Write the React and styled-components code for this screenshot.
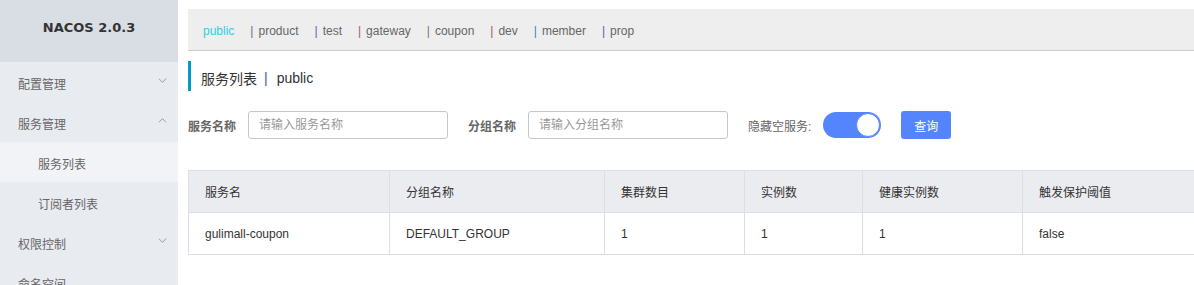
import React, { useState } from 'react';
import styled, { createGlobalStyle } from 'styled-components';

const GlobalStyle = createGlobalStyle`
  html, body {
    margin: 0;
    padding: 0;
    background: #fff;
    font-family: "Liberation Sans", "Noto Sans CJK SC", sans-serif;
    font-size: 12px;
    color: #333;
    overflow: hidden;
  }
  * { box-sizing: border-box; }
`;

const Layout = styled.div`
  display: flex;
  width: 1194px;
  height: 285px;
  overflow: hidden;
`;

const Sidebar = styled.aside`
  width: 178px;
  flex-shrink: 0;
  background: #e8ebf0;
  display: flex;
  flex-direction: column;
  overflow: hidden;
`;

const Brand = styled.div`
  height: 62px;
  flex-shrink: 0;
  background: #d9dde4;
  display: flex;
  align-items: center;
  justify-content: center;
  padding-bottom: 8px;
  font-family: "DejaVu Sans", "Noto Sans", sans-serif;
  font-weight: bold;
  font-size: 13px;
  color: #333;
`;

const MenuItem = styled.div`
  height: 40px;
  flex-shrink: 0;
  display: flex;
  align-items: center;
  justify-content: space-between;
  padding: 2px 11px 0 ${(p) => (p.$sub ? '38px' : '18px')};
  color: #666;
  font-size: 12px;
  background: ${(p) => (p.$active ? '#f1f3f6' : 'transparent')};
`;

const Chevron = styled.svg`
  width: 9px;
  height: 9px;
  margin-top: -6px;
`;

const Main = styled.main`
  flex: 1;
  min-width: 0;
  padding: 9px 0 0 10px;
  display: flex;
  flex-direction: column;
`;

const NamespaceBar = styled.div`
  height: 42px;
  flex-shrink: 0;
  background: #eee;
  border-bottom: 1px solid #ccc;
  display: flex;
  align-items: center;
  padding: 3px 15px 0;
  font-size: 12px;
`;

const NsItem = styled.span`
  color: ${(p) => (p.$active ? '#33cde5' : '#666')};
  margin-right: 16px;
`;

const NsSplit = styled.span`
  color: ${(p) => p.$color};
  margin-right: 5px;
`;

const PageTitle = styled.div`
  margin-top: 10px;
  height: 30px;
  flex-shrink: 0;
  border-left: 3px solid #09c;
  display: flex;
  align-items: center;
  padding: 3px 0 0 10px;
  font-size: 14px;
  color: #333;
`;

const TitleSplit = styled.span`
  color: #3d5a80;
  margin: 0 9px 0 7px;
`;

const SearchRow = styled.div`
  margin-top: 20px;
  height: 28px;
  flex-shrink: 0;
  display: flex;
  align-items: center;
`;

const Label = styled.label`
  font-size: 12px;
  color: #666;
  font-weight: ${(p) => (p.$bold ? 'bold' : 'normal')};
  margin-right: 12px;
  white-space: nowrap;
`;

const Input = styled.input`
  width: 200px;
  height: 28px;
  border: 1px solid #c4c6cf;
  border-radius: 3px;
  padding: 0 10px;
  font-size: 12px;
  font-family: inherit;
  margin-right: 20px;
  outline: none;
  &::placeholder { color: #999; }
`;

const Switch = styled.button`
  width: 58px;
  height: 26px;
  border-radius: 13px;
  border: none;
  padding: 0;
  background: #5584ff;
  position: relative;
  margin-right: 20px;
  cursor: pointer;
`;

const Knob = styled.span`
  position: absolute;
  top: 1px;
  right: 1px;
  width: 24px;
  height: 24px;
  border-radius: 50%;
  background: #fff;
  border: 1px solid #5584ff;
`;

const Button = styled.button`
  width: 50px;
  height: 28px;
  border: none;
  border-radius: 3px;
  background: #5584ff;
  color: #fff;
  font-size: 12px;
  font-family: inherit;
  cursor: pointer;
`;

const Table = styled.table`
  margin-top: 31px;
  width: 1040px;
  border-collapse: collapse;
  table-layout: fixed;
  font-size: 12px;
`;

const Th = styled.th`
  height: 42px;
  background: #ebecf0;
  border: 1px solid #dcdee3;
  text-align: left;
  font-weight: normal;
  color: #333;
  padding: 0 16px;
`;

const Td = styled.td`
  height: 42px;
  border: 1px solid #dcdee3;
  color: #333;
  padding: 0 16px;
`;

const ChevronIcon = ({ up }) => (
  <Chevron viewBox="0 0 10 10">
    <polyline
      points={up ? '1,7 5,3 9,7' : '1,3 5,7 9,3'}
      fill="none"
      stroke="#8a93a3"
      strokeWidth="1"
    />
  </Chevron>
);

const namespaces = [
  { name: 'public', active: true },
  { name: 'product', split: '#6b6b8a' },
  { name: 'test', split: '#5e62a8' },
  { name: 'gateway', split: '#a2625a' },
  { name: 'coupon', split: '#77777f' },
  { name: 'dev', split: '#9a5a4e' },
  { name: 'member', split: '#2f86d0' },
  { name: 'prop', split: '#5e62a8' },
];

const columns = [
  { title: '服务名', width: 201 },
  { title: '分组名称', width: 215 },
  { title: '集群数目', width: 140 },
  { title: '实例数', width: 118 },
  { title: '健康实例数', width: 160 },
  { title: '触发保护阈值', width: 206 },
];

const rows = [['gulimall-coupon', 'DEFAULT_GROUP', '1', '1', '1', 'false']];

export default function App() {
  const [hideEmpty, setHideEmpty] = useState(true);

  return (
    <>
      <GlobalStyle />
      <Layout>
        <Sidebar>
          <Brand>NACOS 2.0.3</Brand>
          <MenuItem>配置管理<ChevronIcon /></MenuItem>
          <MenuItem>服务管理<ChevronIcon up /></MenuItem>
          <MenuItem $sub $active>服务列表</MenuItem>
          <MenuItem $sub>订阅者列表</MenuItem>
          <MenuItem>权限控制<ChevronIcon /></MenuItem>
          <MenuItem>命名空间</MenuItem>
        </Sidebar>
        <Main>
          <NamespaceBar>
            {namespaces.map((ns) => (
              <React.Fragment key={ns.name}>
                {ns.split && <NsSplit $color={ns.split}>|</NsSplit>}
                <NsItem $active={ns.active}>{ns.name}</NsItem>
              </React.Fragment>
            ))}
          </NamespaceBar>
          <PageTitle>
            服务列表<TitleSplit>|</TitleSplit>public
          </PageTitle>
          <SearchRow>
            <Label $bold>服务名称</Label>
            <Input placeholder="请输入服务名称" />
            <Label $bold>分组名称</Label>
            <Input placeholder="请输入分组名称" />
            <Label>隐藏空服务:</Label>
            <Switch onClick={() => setHideEmpty(!hideEmpty)}>
              <Knob />
            </Switch>
            <Button>查询</Button>
          </SearchRow>
          <Table>
            <colgroup>
              {columns.map((c) => (
                <col key={c.title} style={{ width: c.width }} />
              ))}
            </colgroup>
            <thead>
              <tr>
                {columns.map((c) => (
                  <Th key={c.title}>{c.title}</Th>
                ))}
              </tr>
            </thead>
            <tbody>
              {rows.map((r) => (
                <tr key={r[0]}>
                  {r.map((v, i) => (
                    <Td key={i}>{v}</Td>
                  ))}
                </tr>
              ))}
            </tbody>
          </Table>
        </Main>
      </Layout>
    </>
  );
}
